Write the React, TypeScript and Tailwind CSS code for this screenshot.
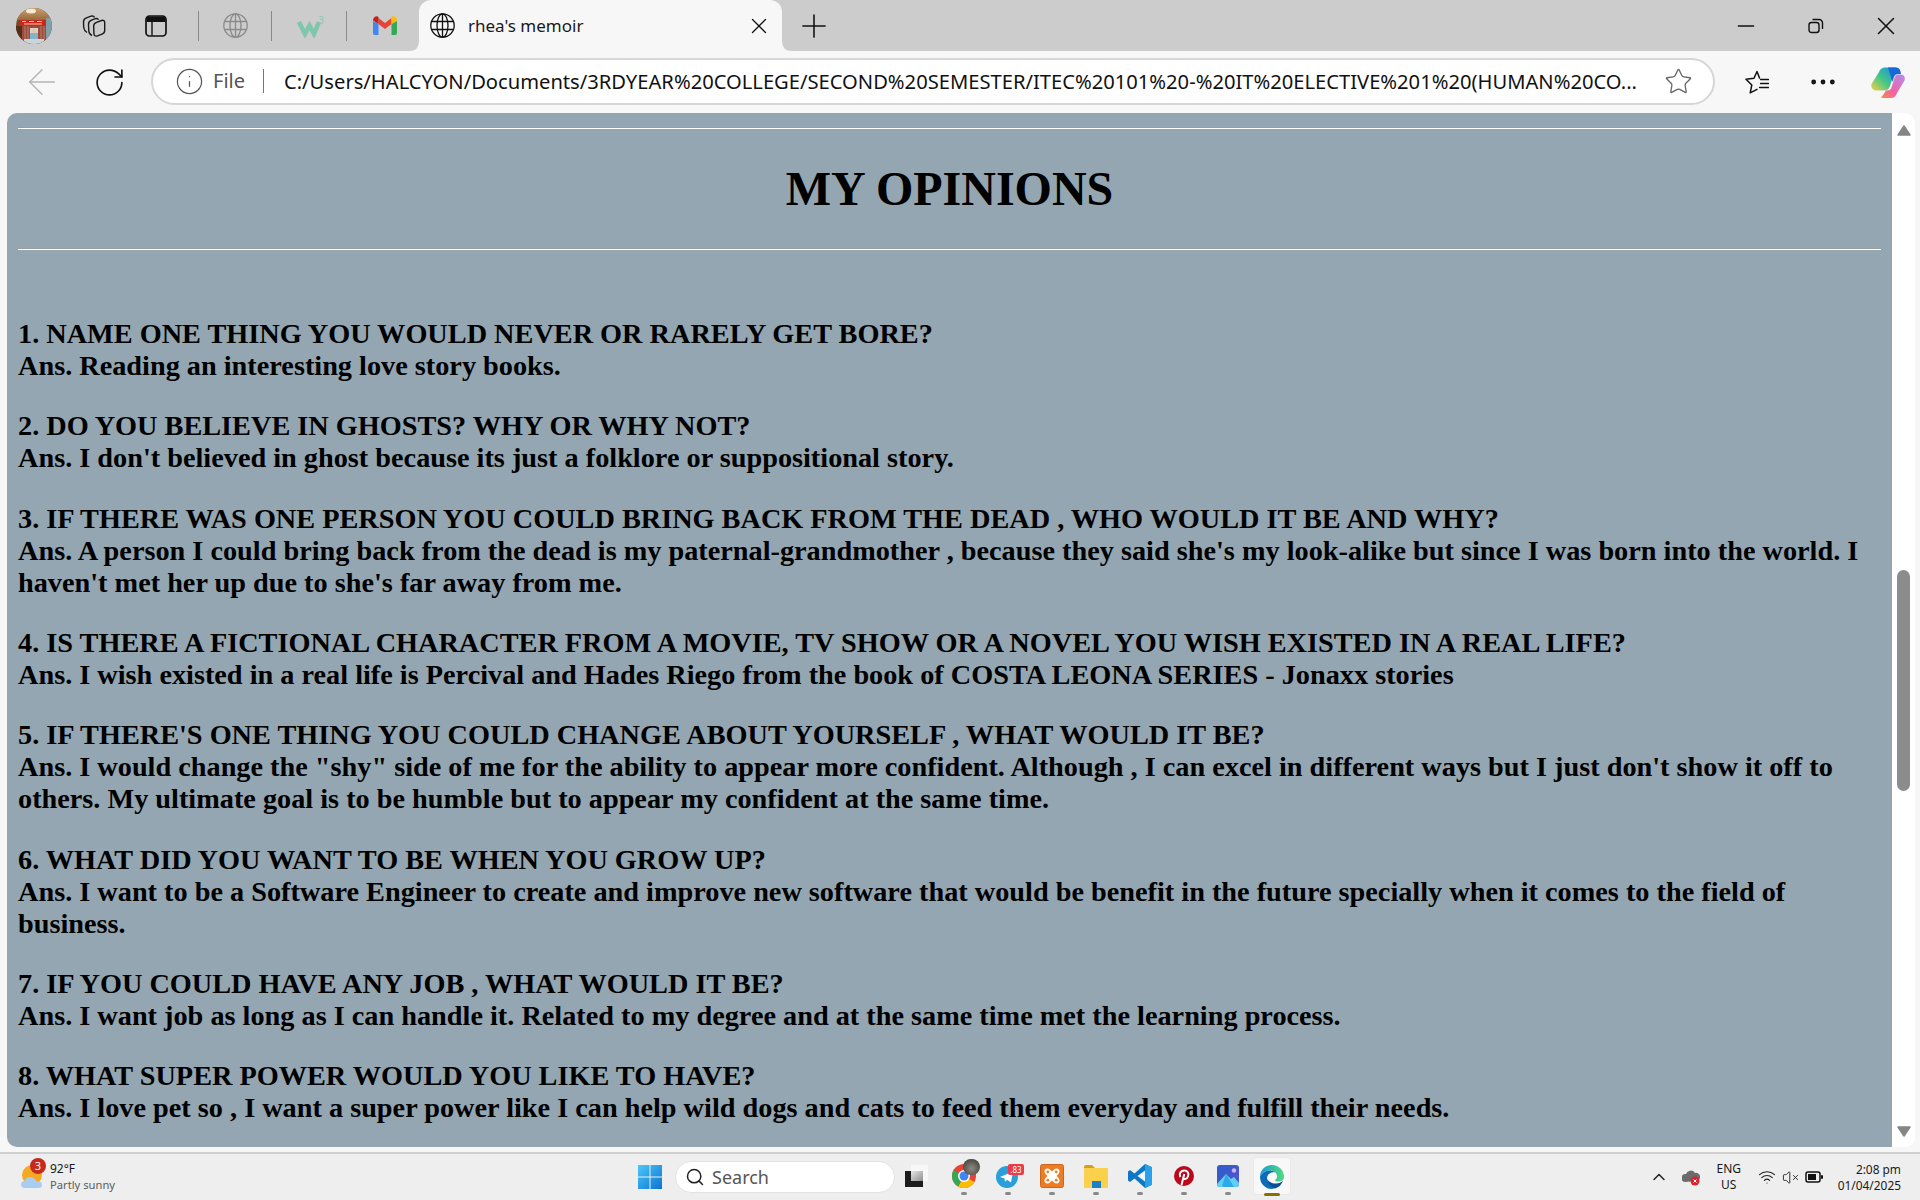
import { ArrowLeft, ChevronUp, Info, Minus, MoreHorizontal, Plus, RotateCw, Search, Star, VolumeX, Wifi, X } from 'lucide-react';
import type { ReactNode } from 'react';

const qa = [
  { q: '1. NAME ONE THING YOU WOULD NEVER OR RARELY GET BORE?', a: 'Ans. Reading an interesting love story books.' },
  { q: '2. DO YOU BELIEVE IN GHOSTS? WHY OR WHY NOT?', a: "Ans. I don't believed in ghost because its just a folklore or suppositional story." },
  { q: '3. IF THERE WAS ONE PERSON YOU COULD BRING BACK FROM THE DEAD , WHO WOULD IT BE AND WHY?', a: "Ans. A person I could bring back from the dead is my paternal-grandmother , because they said she's my look-alike but since I was born into the world. I haven't met her up due to she's far away from me." },
  { q: '4. IS THERE A FICTIONAL CHARACTER FROM A MOVIE, TV SHOW OR A NOVEL YOU WISH EXISTED IN A REAL LIFE?', a: 'Ans. I wish existed in a real life is Percival and Hades Riego from the book of COSTA LEONA SERIES - Jonaxx stories' },
  { q: "5. IF THERE'S ONE THING YOU COULD CHANGE ABOUT YOURSELF , WHAT WOULD IT BE?", a: 'Ans. I would change the "shy" side of me for the ability to appear more confident. Although , I can excel in different ways but I just don\'t show it off to others. My ultimate goal is to be humble but to appear my confident at the same time.' },
  { q: '6. WHAT DID YOU WANT TO BE WHEN YOU GROW UP?', a: 'Ans. I want to be a Software Engineer to create and improve new software that would be benefit in the future specially when it comes to the field of business.' },
  { q: '7. IF YOU COULD HAVE ANY JOB , WHAT WOULD IT BE?', a: 'Ans. I want job as long as I can handle it. Related to my degree and at the same time met the learning process.' },
  { q: '8. WHAT SUPER POWER WOULD YOU LIKE TO HAVE?', a: 'Ans. I love pet so , I want a super power like I can help wild dogs and cats to feed them everyday and fulfill their needs.' },
];

function Avatar() {
  return (
    <svg width="36" height="36" viewBox="0 0 36 36" className="ml-[16px] shrink-0">
      <defs>
        <clipPath id="av"><circle cx="18" cy="18" r="18" /></clipPath>
        <linearGradient id="avTop" x1="0" y1="0" x2="0" y2="1">
          <stop offset="0" stopColor="#c9a172" />
          <stop offset="1" stopColor="#9a6a3c" />
        </linearGradient>
      </defs>
      <g clipPath="url(#av)">
        <rect width="36" height="36" fill="#7c4a2a" />
        <rect width="36" height="12" fill="url(#avTop)" />
        <ellipse cx="15" cy="3" rx="5" ry="2.500" fill="#f4ead2" />
        <rect x="4" y="12" width="27" height="6" fill="#c8281c" />
        <path d="M6 13.500h4M13 13.500h5M21 13.500h5M8 16h18" stroke="#f3c9a0" strokeWidth="1" />
        <rect x="0" y="18" width="6" height="18" fill="#54301c" />
        <rect x="30" y="10" width="6" height="26" fill="#7fa0a8" />
        <rect x="6" y="18" width="24" height="18" fill="#9c4a3c" />
        <path d="M9 18v18M12 18v18M25 18v18M28 18v18" stroke="#b97c6a" strokeWidth="1" />
        <rect x="14" y="20" width="8" height="5" fill="#d8d4cc" />
        <circle cx="18" cy="23" r="2.200" fill="#e6c4a8" />
        <rect x="14" y="25" width="8" height="7" fill="#7fb4cc" />
        <rect x="8" y="31" width="20" height="5" fill="#c8d6dc" />
      </g>
    </svg>
  );
}

function CollectionsIcon() {
  return (
    <svg width="26" height="26" viewBox="0 0 26 26" fill="none" stroke="#1a1a1a" strokeWidth="1.400" strokeLinejoin="round" className="ml-[29px] shrink-0">
      <path d="M6 19.500C3.500 18 3 16.500 2.700 14.500L2.500 9C2.400 6.500 3.500 5.500 5.500 4.800L10 3.200C12 2.600 13 3.300 13.600 4.500" />
      <path d="M11 22.500C8.500 21.500 8 20 7.800 18L7.500 11.500C7.400 9 8.500 8 10.500 7.200L14.500 5.700C16 5.200 17 5.600 17.500 6.800" />
      <path d="M12.700 13C12.600 11 13.600 10 15.500 9.300L20.500 7.500C22.500 6.900 23.700 7.800 23.700 9.800V17.500C23.700 19.500 22.800 20.500 21 21.200L16.500 22.900C14.300 23.600 13 22.700 12.900 20.500Z" />
    </svg>
  );
}

function TabActionsIcon() {
  return (
    <svg width="22" height="22" viewBox="0 0 22 22" fill="none" className="ml-[38px] shrink-0">
      <rect x="1" y="1" width="20" height="20" rx="3.500" stroke="#111" strokeWidth="1.700" />
      <path d="M1.500 4a2.500 2.500 0 0 1 2.500-2.500h14a2.500 2.500 0 0 1 2.500 2.500v3h-19z" fill="#111" />
      <path d="M7 7v13.500" stroke="#111" strokeWidth="1.400" />
    </svg>
  );
}

function GlobeIcon({ color, className }: { color: string; className?: string }) {
  return (
    <svg width="25" height="25" viewBox="0 0 25 25" fill="none" stroke={color} strokeWidth="1.300" className={className}>
      <circle cx="12.500" cy="12.500" r="11.700" />
      <ellipse cx="12.500" cy="12.500" rx="5.500" ry="11.700" />
      <path d="M12.500 1v23M2 8.500h21M2 16.500h21" />
    </svg>
  );
}

function W3Icon() {
  return (
    <div className="ml-[25px] w-[26px] h-[24px] flex shrink-0 relative">
      <svg width="26" height="24" viewBox="0 0 26 24">
        <path d="M2 8 L8 20 L12.500 11.500 L17 20 L22 8" fill="none" stroke="#7ec7ad" strokeWidth="4.500" />
      </svg>
      <span className="absolute top-[0px] right-[-1px] text-[10px] leading-[12px] text-[#8ec9b5]">3</span>
    </div>
  );
}

function GmailIcon() {
  return (
    <svg width="24" height="19" viewBox="0 0 24 19" className="ml-[26px] shrink-0">
      <path d="M0 5v12a2 2 0 0 0 2 2h3.500V8z" fill="#4285f4" />
      <path d="M24 5v12a2 2 0 0 1-2 2h-3.500V8z" fill="#34a853" />
      <path d="M5.500 8 12 13l6.500-5V2L12 7 5.500 2z" fill="#ea4335" />
      <path d="M0 4.500C0 1 3.500-.8 5.500 1V8L0 4.500z" fill="#c5221f" />
      <path d="M24 4.500C24 1 20.500-.8 18.500 1V8L24 4.500z" fill="#fbbc04" />
    </svg>
  );
}

function RestoreIcon() {
  return (
    <svg width="16" height="16" viewBox="0 0 16 16" fill="none" stroke="#111" strokeWidth="1.400">
      <rect x="1" y="4.500" width="10" height="10" rx="2.500" />
      <path d="M4.500 1.500h6.500a3.500 3.500 0 0 1 3.500 3.500v6" />
    </svg>
  );
}

function FavoritesIcon() {
  return (
    <svg width="24" height="24" viewBox="0 0 24 24" fill="none" stroke="#111" strokeWidth="1.500" strokeLinejoin="round" strokeLinecap="round" className="ml-[30px] shrink-0">
      <path d="M14.500 8 12 1.500 9 8.300 1 9.300 6.800 15 5.200 22.800 12 19.300" />
      <path d="M15.500 9.500h8M15.500 13.500h8M14.500 17.500h9" strokeWidth="1.300" />
    </svg>
  );
}

function CopilotIcon() {
  return (
    <svg width="34" height="33" viewBox="0 0 34 33" className="ml-[32px] shrink-0">
      <defs>
        <linearGradient id="cpA" x1="0" y1="1" x2="1" y2="0">
          <stop offset="0" stopColor="#f8cf4a" />
          <stop offset=".45" stopColor="#45c883" />
          <stop offset="1" stopColor="#1a8de8" />
        </linearGradient>
        <linearGradient id="cpB" x1="1" y1="0" x2="0" y2="1">
          <stop offset="0" stopColor="#b48cf2" />
          <stop offset=".6" stopColor="#f064a4" />
          <stop offset="1" stopColor="#f8884a" />
        </linearGradient>
      </defs>
      <path d="M8 6c1-3 3-4.500 6-4.500h11L19 20c-1 3-3 4.500-6 4.500H6c-4 0-6.500-2.500-5.500-6.500z" fill="url(#cpA)" />
      <path d="M26 27c-1 3-3 5-6 5H10l5-7.500h1c2.500 0 4-1 4.500-3l3-9.500c.7-2.500 2-3.500 4-3.500h2c3.500 0 5 2.500 4 6z" fill="url(#cpB)" />
      <path d="M17 1.500h8c3 0 4.500 2 5 6.500h-2.500c-2.500 0-4 1-4.700 3.500L21.500 16z" fill="#1768d8" />
    </svg>
  );
}

function ScrollArrow({ down }: { down?: boolean }) {
  return (
    <svg width="14" height="11" viewBox="0 0 14 11" className={down ? 'rotate-180' : ''}>
      <path d="M7 1 L13 10 H1 Z" fill="#858585" stroke="#858585" strokeLinejoin="round" strokeWidth="1.500" />
    </svg>
  );
}

function TabFlare({ right }: { right?: boolean }) {
  return (
    <svg width="10" height="10" viewBox="0 0 10 10" className={right ? 'absolute bottom-0 right-[-10px] -scale-x-100' : 'absolute bottom-0 left-[-10px]'}>
      <path d="M10 0V10H0Q10 10 10 0Z" fill="#f7f7f7" />
    </svg>
  );
}

function WeatherIcon() {
  return (
    <div className="relative ml-[20px] w-[26px] h-[26px] shrink-0">
      <svg width="26" height="26" viewBox="0 0 26 26">
        <circle cx="12" cy="11" r="10" fill="#f6a823" />
        <path d="M5 24c-2.500 0-4-1.500-4-3.500S2.500 17 4.500 17c1-2.500 3-4 5.500-4 3 0 5 1.500 6 4 3 0 6 1 6 3.800S20 24 18 24z" fill="#a9cdf2" />
      </svg>
      <span className="absolute top-[-6px] right-[0px] w-[16px] h-[16px] rounded-full bg-[#c42b1c] text-white text-[11px] leading-[16px] text-center">3</span>
    </div>
  );
}

function TaskIcon({ children, noDot }: { children: ReactNode; noDot?: boolean }) {
  return (
    <div className="relative w-[44px] h-[46px] flex flex-col items-center pt-[10px] gap-[4px] shrink-0">
      {children}
      {!noDot && <span className="w-[6px] h-[3px] rounded-full bg-[#8a8a8a]" />}
    </div>
  );
}

function TaskApps() {
  return (
    <div className="flex items-center">
      <TaskIcon noDot>
        <svg width="24" height="24" viewBox="0 0 24 24">
          <defs>
            <linearGradient id="mid" x1="0" y1="0" x2="1" y2="1">
              <stop offset="0" stopColor="#e6e6e6" />
              <stop offset="1" stopColor="#8f8f8f" />
            </linearGradient>
          </defs>
          <rect x="6" y="1" width="17" height="16" fill="#f8f8f8" />
          <rect x="0" y="7" width="18" height="16" fill="#1c1c1c" />
          <rect x="6" y="7" width="12" height="10" fill="url(#mid)" />
        </svg>
      </TaskIcon>
      <div className="ml-[3px]">
        <TaskIcon>
          <svg width="24" height="24" viewBox="0 0 24 24">
            <circle cx="12" cy="12" r="12" fill="#ea4335" />
            <path d="M12 12 L22.400 18 A12 12 0 0 1 6 22.400 Z" fill="#fbbc04" />
            <path d="M12 12 L6 22.400 A12 12 0 0 1 1.600 6 Z" fill="#34a853" />
            <circle cx="12" cy="12" r="6" fill="#fff" />
            <circle cx="12" cy="12" r="4.500" fill="#4285f4" />
          </svg>
          <span className="absolute top-[5px] left-[21px] w-[17px] h-[16px] rounded-full bg-[radial-gradient(circle_at_50%_60%,#8f8a80,#35322e)]" />
        </TaskIcon>
      </div>
      <TaskIcon>
        <svg width="24" height="24" viewBox="0 0 24 24">
          <circle cx="11" cy="13" r="11" fill="#2a9ed8" />
          <path d="M4 13l13-5.500-2 11-4-2.800-2 2-.5-3.200z" fill="#fff" />
        </svg>
        <span className="absolute top-[10px] left-[22px] w-[16px] h-[11px] rounded-[2px] bg-[#eb3b46] text-white text-[8px] leading-[11px] text-center">.83</span>
      </TaskIcon>
      <TaskIcon>
        <svg width="24" height="24" viewBox="0 0 24 24">
          <rect x="0.500" y="0.500" width="23" height="23" rx="2" fill="#ee7a22" stroke="#c9651c" />
          <path d="M7.500 4.500a3 3 0 0 0-3 3c0 2 1.500 3 3 4.500-1.500 1.500-3 2.500-3 4.500a3 3 0 0 0 3 3c2 0 3-1.500 4.500-3 1.500 1.500 2.500 3 4.500 3a3 3 0 0 0 3-3c0-2-1.500-3-3-4.500 1.500-1.500 3-2.500 3-4.500a3 3 0 0 0-3-3c-2 0-3 1.500-4.500 3-1.500-1.500-2.500-3-4.500-3z" fill="#fff" />
          <circle cx="7.800" cy="7.800" r="1.400" fill="#ee7a22" />
          <circle cx="16.200" cy="7.800" r="1.400" fill="#ee7a22" />
          <circle cx="7.800" cy="16.200" r="1.400" fill="#ee7a22" />
          <circle cx="16.200" cy="16.200" r="1.400" fill="#ee7a22" />
        </svg>
      </TaskIcon>
      <TaskIcon>
        <svg width="24" height="24" viewBox="0 0 24 24">
          <path d="M0 3a2 2 0 0 1 2-2h6l3 3h-11z" fill="#d6a01c" />
          <rect x="0" y="4" width="24" height="20" rx="1" fill="#fbd04b" />
          <rect x="8" y="17" width="9" height="7" fill="#1a80c9" />
        </svg>
      </TaskIcon>
      <TaskIcon>
        <svg width="24" height="24" viewBox="0 0 24 24">
          <path d="M17 0l7 3.200v17.600L17 24 6.500 14.500 2 18 0 16.500v-9L2 6l4.500 3.500z" fill="#0f78c4" />
          <path d="M17 6.500v11L9.500 12z" fill="#eef6fc" />
          <path d="M17 0l7 3.200v17.600L17 24z" fill="#2aa0ea" />
        </svg>
      </TaskIcon>
      <TaskIcon>
        <svg width="24" height="24" viewBox="0 0 24 24">
          <circle cx="12" cy="12" r="10" fill="#bd081c" />
          <path d="M9.500 21l2.800-11M8.300 13c-1.800-3.500.8-6.500 4-6.500s5 2.700 3.700 6c-1.200 3-4.300 3.200-5 1" fill="none" stroke="#fff" strokeWidth="2" />
        </svg>
      </TaskIcon>
      <TaskIcon>
        <svg width="24" height="24" viewBox="0 0 24 24">
          <defs>
            <linearGradient id="ph" x1="0" y1="0" x2="1" y2="1">
              <stop offset="0" stopColor="#2b5fc9" />
              <stop offset="1" stopColor="#5a4fd0" />
            </linearGradient>
          </defs>
          <rect x="1" y="1" width="22" height="22" rx="3" fill="url(#ph)" />
          <path d="M1 20l9-10 5 5 3-2 5 6v1a3 3 0 0 1-3 3H4a3 3 0 0 1-3-3z" fill="#5fd0f0" />
          <path d="M10 10l8 13H8l-2-1z" fill="#2fa8e8" />
          <circle cx="18" cy="6.500" r="2.200" fill="#d2b0f2" />
        </svg>
      </TaskIcon>
      <div className="w-[44px] h-[46px] flex justify-center pt-[3px] shrink-0">
        <div className="w-[38px] h-[38px] flex flex-col items-center pt-[7px] gap-[4px] rounded-[4px] bg-[#f8f8f8] border border-[#e8e8e8]">
          <svg width="24" height="24" viewBox="0 0 24 24" className="shrink-0">
            <defs>
              <linearGradient id="edgeA" x1="0" y1="0" x2="1" y2="0">
                <stop offset="0" stopColor="#1a9bd8" />
                <stop offset="1" stopColor="#4fdc7c" />
              </linearGradient>
            </defs>
            <path d="M12 0a12 12 0 0 1 12 12c0 3-2.500 4.500-5.500 4.500-2 0-3.500-.5-3.500-1.500 1-.5 2-1.500 2-3.500C17 8 14 5.500 10 5.500 5 5.500 1 9 0 12 0 5 5 0 12 0z" fill="url(#edgeA)" />
            <path d="M0 12c1-3 5-6.500 10-6.500 2 0 4 .8 5 2-4-1-8 1.500-8 6 0 4 3.500 8 8 9.500A12 12 0 0 1 12 24 12 12 0 0 1 0 12z" fill="#0c6cb8" />
            <path d="M15 23.500c-4.500-1.500-8-5.500-8-9.500 2 3 5 4.500 9 4.500 3 0 5.500-1 7-3a12 12 0 0 1-8 8z" fill="#0a4f94" />
          </svg>
          <span className="w-[16px] h-[3px] rounded-full bg-[#857200] shrink-0" />
        </div>
      </div>
    </div>
  );
}

export default function App() {
  return (
    <div className="w-[1920px] h-[1200px] flex flex-col bg-[#f7f7f7] overflow-hidden font-['Noto_Sans',sans-serif]">
      {/* tab strip */}
      <div className="h-[51px] shrink-0 bg-[#cccccc] flex items-center">
        <Avatar />
        <CollectionsIcon />
        <TabActionsIcon />
        <span className="ml-[31px] w-px h-[30px] bg-[#8a8a8a] shrink-0" />
        <GlobeIcon color="#8a8a8a" className="ml-[24px] shrink-0" />
        <span className="ml-[23px] w-px h-[30px] bg-[#8a8a8a] shrink-0" />
        <W3Icon />
        <span className="ml-[23px] w-px h-[30px] bg-[#8a8a8a] shrink-0" />
        <GmailIcon />
        <div className="relative ml-[22px] w-[363px] h-[51px] bg-[#f7f7f7] rounded-t-[12px] flex items-center pl-[11px] shrink-0">
          <TabFlare />
          <GlobeIcon color="#111" />
          <span className="ml-[13px] text-[17px] text-[#1a1a1a]">rhea's memoir</span>
          <X size={26} strokeWidth={1.2} className="ml-auto mr-[10px] text-[#111]" />
          <TabFlare right />
        </div>
        <Plus size={38} strokeWidth={1} className="ml-[13px] text-[#111] shrink-0" />
        <div className="ml-auto flex items-center">
          <Minus size={26} strokeWidth={1.4} className="text-[#111]" />
          <div className="ml-[49px]"><RestoreIcon /></div>
          <X size={30} strokeWidth={1.2} className="ml-[47px] mr-[19px] text-[#111]" />
        </div>
      </div>

      {/* toolbar */}
      <div className="h-[62px] shrink-0 flex items-center">
        <ArrowLeft size={42} strokeWidth={0.85} className="ml-[21px] text-[#b5b5b5] shrink-0" />
        <RotateCw size={33} strokeWidth={1.2} className="ml-[30px] text-[#111] shrink-0" />
        <div className="ml-[25px] mb-[2px] w-[1564px] h-[47px] bg-white rounded-full border-2 border-[#d6d6d6] flex items-center shrink-0">
          <Info size={29} strokeWidth={1} className="ml-[22px] text-[#555]" />
          <span className="ml-[9px] text-[20px] text-[#555]">File</span>
          <span className="ml-[18px] w-px h-[24px] bg-[#777]" />
          <span className="ml-[20px] text-[20.16px] text-[#111] whitespace-nowrap">C:/Users/HALCYON/Documents/3RDYEAR%20COLLEGE/SECOND%20SEMESTER/ITEC%20101%20-%20IT%20ELECTIVE%201%20(HUMAN%20CO...</span>
          <Star size={29} strokeWidth={1.1} className="ml-auto mr-[20px] text-[#666]" />
        </div>
        <FavoritesIcon />
        <MoreHorizontal size={32} strokeWidth={1.6} className="ml-[38px] text-[#111] shrink-0" />
        <CopilotIcon />
      </div>

      {/* page + scrollbar */}
      <div className="h-[1034px] shrink-0 ml-[7px] mr-[5px] flex">
        <div className="flex-1 min-w-0 bg-[#93a6b1] rounded-tl-[10px] rounded-bl-[10px] pl-[11px] pr-[11px] pt-[14px] overflow-hidden font-['Liberation_Serif',serif] text-black font-bold">
          <hr className="border-0 border-t border-b border-t-[#9b9b9b] border-b-white" />
          <h1 className="text-[48px] leading-[55px] text-center mt-[32px] mb-[32px] font-bold">MY OPINIONS</h1>
          <hr className="border-0 border-t border-b border-t-[#9b9b9b] border-b-white" />
          <div className="pt-[68px] text-[28.27px] leading-[32px]">
            {qa.map(item => (
              <p key={item.q} className="mb-[28.35px]">
                {item.q}
                <br />
                {item.a}
              </p>
            ))}
          </div>
        </div>
        <div className="w-[23px] shrink-0 bg-white rounded-tr-[10px] rounded-br-[10px] flex flex-col items-center pt-[12px] pb-[10px]">
          <ScrollArrow />
          <div className="mt-[434px] w-[13px] h-[221px] rounded-full bg-[#8c8c8c]" />
          <div className="mt-auto"><ScrollArrow down /></div>
        </div>
      </div>

      {/* taskbar */}
      <div className="h-[48px] mt-[5px] shrink-0 border-t-2 border-t-[#cfcfcf] bg-[#eeeeee] flex items-center">
        <div className="w-[638px] flex items-center shrink-0">
          <WeatherIcon />
          <div className="ml-[4px] leading-[16px]">
            <div className="text-[12px] text-[#1a1a1a]">92°F</div>
            <div className="text-[11.2px] text-[#5c5c5c]">Partly sunny</div>
          </div>
        </div>
        <svg width="24" height="24" viewBox="0 0 24 24" className="shrink-0">
          <defs>
            <linearGradient id="win" x1="0" y1="0" x2="1" y2="1">
              <stop offset="0" stopColor="#4dc6f7" />
              <stop offset="1" stopColor="#0a74d1" />
            </linearGradient>
          </defs>
          <path d="M0 0h11.500v11.500H0zM12.500 0H24v11.500H12.500zM0 12.500h11.500V24H0zM12.500 12.500H24V24H12.500z" fill="url(#win)" />
        </svg>
        <div className="ml-[13px] w-[220px] h-[32px] rounded-full bg-white border border-[#e2e2e2] flex items-center pl-[9px] shrink-0">
          <Search size={20} strokeWidth={1.8} className="text-[#222]" />
          <span className="ml-[7px] text-[18px] text-[#555]">Search</span>
        </div>
        <TaskApps />
        <div className="ml-auto flex items-center mr-[19px]">
          <ChevronUp size={20} strokeWidth={1.8} className="text-[#222]" />
          <svg width="18" height="18" viewBox="0 0 18 18" className="ml-[13px]">
            <path d="M3 14a4 4 0 0 1 1-8 5 5 0 0 1 9-1 4 4 0 0 1 2 8z" fill="#6b6b6b" />
            <circle cx="13" cy="13" r="4.500" fill="#d9232e" />
            <path d="M11.500 11.500l3 3m0-3l-3 3" stroke="#fff" strokeWidth="1" />
          </svg>
          <div className="ml-[13px] w-[32px] text-center text-[12px] leading-[16px] text-[#1a1a1a]">ENG<br />US</div>
          <Wifi size={18} strokeWidth={1.5} className="ml-[13px] text-[#222]" />
          <VolumeX size={17} strokeWidth={1.3} className="ml-[6px] text-[#222]" />
          <svg width="18" height="12" viewBox="0 0 18 12" className="ml-[6px]" fill="none">
            <rect x="1" y="1" width="14" height="10" rx="2" stroke="#111" strokeWidth="1.500" />
            <rect x="3" y="3" width="8" height="6" fill="#111" />
            <rect x="16" y="4" width="2" height="4" rx="1" fill="#111" />
          </svg>
          <div className="ml-[15px] text-right text-[11.9px] leading-[16px] text-[#1a1a1a]">2:08 pm<br />01/04/2025</div>
        </div>
      </div>
    </div>
  );
}
